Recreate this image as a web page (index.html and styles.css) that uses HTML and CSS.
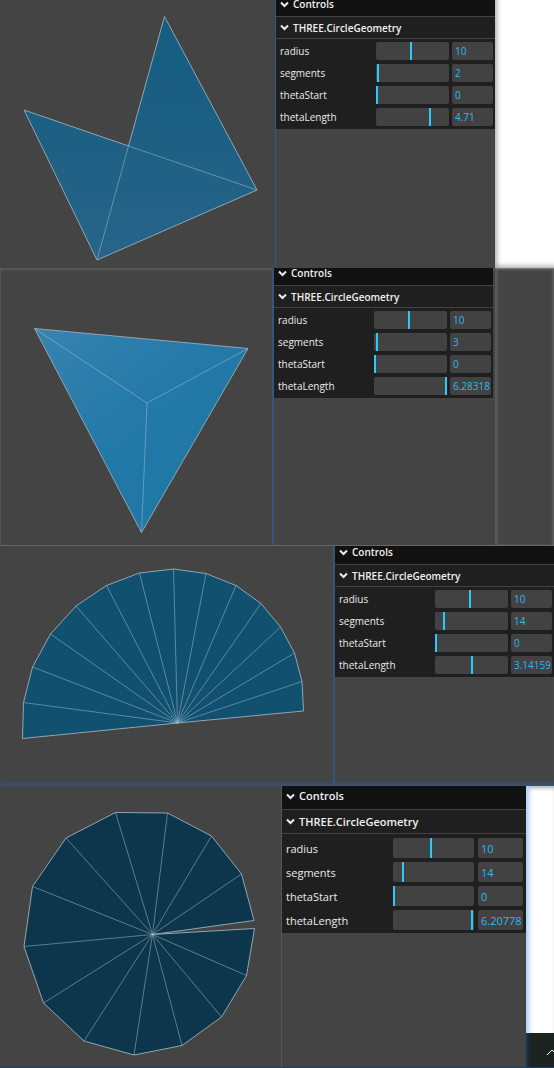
FILE: index.html
```html
<!DOCTYPE html>
<html lang="en">
<head>
<meta charset="utf-8">
<meta name="viewport" content="width=device-width, initial-scale=1">
<title>THREE.CircleGeometry</title>
<link rel="stylesheet" href="styles.css">
</head>
<body>
<main class="stack">

<section class="shot shot-notch">
  <div class="scene">
    <svg viewBox="0 0 275 268" role="img" aria-label="Circle with 2 segments">
      <defs><linearGradient id="g1" x1="0" y1="0" x2="0" y2="1"><stop offset="0" stop-color="#155d82"/><stop offset=".4" stop-color="#1b5f83"/><stop offset="1" stop-color="#286489"/></linearGradient></defs>
      <path class="face" fill="url(#g1)" d="M24 110 97 260 257 190 164.5 16.5 128.5 146Z"/>
      <path class="ray" d="M128.5 146 257 190M128.5 146 97 260"/>
    </svg>
  </div>
  <div class="gui">
    <button class="bar" type="button"><svg class="chev" viewBox="0 0 9 7"><path d="M1 1.5 4.5 5 8 1.5"/></svg>Controls</button>
    <button class="folder" type="button"><svg class="chev" viewBox="0 0 9 7"><path d="M1 1.5 4.5 5 8 1.5"/></svg>THREE.CircleGeometry</button>
    <div class="rows">
      <div class="row"><label for="r1">radius</label><input id="r1" type="range" min="1" max="20" value="10"><input type="text" aria-label="radius value" value="10"></div>
      <div class="row"><label for="s1">segments</label><input id="s1" type="range" min="0" max="128" value="2"><input type="text" aria-label="segments value" value="2"></div>
      <div class="row"><label for="t1">thetaStart</label><input id="t1" type="range" min="0" max="6.28318" step="any" value="0"><input type="text" aria-label="thetaStart value" value="0"></div>
      <div class="row"><label for="l1">thetaLength</label><input id="l1" type="range" min="0" max="6.28318" step="any" value="4.71"><input type="text" aria-label="thetaLength value" value="4.71"></div>
    </div>
  </div>
  <div class="side side-white"></div>
</section>

<section class="shot shot-triangle">
  <div class="scene">
    <svg viewBox="0 0 272 277" role="img" aria-label="Circle with 3 segments">
      <defs><linearGradient id="g2" x1="0" y1="0" x2=".6" y2=".7"><stop offset="0" stop-color="#3783b1"/><stop offset=".75" stop-color="#2278a7"/><stop offset="1" stop-color="#2078a6"/></linearGradient></defs>
      <path class="face" fill="url(#g2)" d="M34.5 60.5 248 80.5 141.5 264.5Z"/>
      <path class="ray" d="M147 135 34.5 60.5M147 135 248 80.5M147 135 141.5 264.5"/>
    </svg>
  </div>
  <div class="gui">
    <button class="bar" type="button"><svg class="chev" viewBox="0 0 9 7"><path d="M1 1.5 4.5 5 8 1.5"/></svg>Controls</button>
    <button class="folder" type="button"><svg class="chev" viewBox="0 0 9 7"><path d="M1 1.5 4.5 5 8 1.5"/></svg>THREE.CircleGeometry</button>
    <div class="rows">
      <div class="row"><label for="r2">radius</label><input id="r2" type="range" min="1" max="20" value="10"><input type="text" aria-label="radius value" value="10"></div>
      <div class="row"><label for="s2">segments</label><input id="s2" type="range" min="0" max="128" value="3"><input type="text" aria-label="segments value" value="3"></div>
      <div class="row"><label for="t2">thetaStart</label><input id="t2" type="range" min="0" max="6.28318" step="any" value="0"><input type="text" aria-label="thetaStart value" value="0"></div>
      <div class="row"><label for="l2">thetaLength</label><input id="l2" type="range" min="0" max="6.28318" step="any" value="6.28318"><input type="text" aria-label="thetaLength value" value="6.28318"></div>
    </div>
  </div>
  <div class="side side-grey"></div>
</section>

<section class="shot shot-half">
  <div class="scene">
    <svg viewBox="0 0 333 239" role="img" aria-label="Half circle with 14 segments">
      <path class="face" fill="#12506f" d="M177.5 177 22.5 192.5 23.5 156.5 32.5 121 50.5 88 76 60 106.5 39.5 139.5 27 173.5 23 206 27.5 236 39.5 261 57.5 280.5 81 294.5 107 302 135.5 303.5 165Z"/>
      <path class="ray" d="M177.5 177 23.5 156.5M177.5 177 32.5 121M177.5 177 50.5 88M177.5 177 76 60M177.5 177 106.5 39.5M177.5 177 139.5 27M177.5 177 173.5 23M177.5 177 206 27.5M177.5 177 236 39.5M177.5 177 261 57.5M177.5 177 280.5 81M177.5 177 294.5 107M177.5 177 302 135.5"/>
    </svg>
  </div>
  <div class="gui">
    <button class="bar" type="button"><svg class="chev" viewBox="0 0 9 7"><path d="M1 1.5 4.5 5 8 1.5"/></svg>Controls</button>
    <button class="folder" type="button"><svg class="chev" viewBox="0 0 9 7"><path d="M1 1.5 4.5 5 8 1.5"/></svg>THREE.CircleGeometry</button>
    <div class="rows">
      <div class="row"><label for="r3">radius</label><input id="r3" type="range" min="1" max="20" value="10"><input type="text" aria-label="radius value" value="10"></div>
      <div class="row"><label for="s3">segments</label><input id="s3" type="range" min="0" max="128" value="14"><input type="text" aria-label="segments value" value="14"></div>
      <div class="row"><label for="t3">thetaStart</label><input id="t3" type="range" min="0" max="6.28318" step="any" value="0"><input type="text" aria-label="thetaStart value" value="0"></div>
      <div class="row"><label for="l3">thetaLength</label><input id="l3" type="range" min="0" max="6.28318" step="any" value="3.14159"><input type="text" aria-label="thetaLength value" value="3.14159"></div>
    </div>
  </div>
</section>

<section class="shot shot-open">
  <div class="scene">
    <svg viewBox="0 0 281 281" role="img" aria-label="Open circle with 14 segments">
      <path class="face" fill="#0d354b" d="M152.5 148.5 254 134.5 241.5 88 211.5 50 167.5 27 115.5 26.5 66 52 32.5 100.5 24 160.5 43.5 217 84 255 134 269 182 259.5 221.5 231 246.5 189.5 254.5 142.5Z"/>
      <path class="ray" d="M152.5 148.5 241.5 88M152.5 148.5 211.5 50M152.5 148.5 167.5 27M152.5 148.5 115.5 26.5M152.5 148.5 66 52M152.5 148.5 32.5 100.5M152.5 148.5 24 160.5M152.5 148.5 43.5 217M152.5 148.5 84 255M152.5 148.5 134 269M152.5 148.5 182 259.5M152.5 148.5 221.5 231M152.5 148.5 246.5 189.5"/>
    </svg>
  </div>
  <div class="gui">
    <button class="bar" type="button"><svg class="chev" viewBox="0 0 9 7"><path d="M1 1.5 4.5 5 8 1.5"/></svg>Controls</button>
    <button class="folder" type="button"><svg class="chev" viewBox="0 0 9 7"><path d="M1 1.5 4.5 5 8 1.5"/></svg>THREE.CircleGeometry</button>
    <div class="rows">
      <div class="row"><label for="r4">radius</label><input id="r4" type="range" min="1" max="20" value="10"><input type="text" aria-label="radius value" value="10"></div>
      <div class="row"><label for="s4">segments</label><input id="s4" type="range" min="0" max="128" value="14"><input type="text" aria-label="segments value" value="14"></div>
      <div class="row"><label for="t4">thetaStart</label><input id="t4" type="range" min="0" max="6.28318" step="any" value="0"><input type="text" aria-label="thetaStart value" value="0"></div>
      <div class="row"><label for="l4">thetaLength</label><input id="l4" type="range" min="0" max="6.28318" step="any" value="6.20778"><input type="text" aria-label="thetaLength value" value="6.20778"></div>
    </div>
  </div>
  <div class="side side-tray">
    <div class="tray"><svg viewBox="0 0 12 8"><path d="M1 7 6 2 11 7"/></svg></div>
  </div>
</section>

</main>
</body>
</html>
```
FILE: styles.css
```css
* { box-sizing: border-box; }
body {
  margin: 0;
  background: #444;
  font-family: "Open Sans", "Noto Sans", sans-serif;
}
.stack { display: flex; flex-direction: column; }

.shot {
  --bar: 16px;
  --bar-end: 8px;
  --folder: 23px;
  --field: 18px;
  --gap: 4px;
  --pad: 3px;
  --slider: 73px;
  --number: 41px;
  --between: 3px;
  --text: 10px;
  display: flex;
  background: #444;
}
.scene { flex: 1; min-width: 0; }
.scene svg { display: block; width: 100%; height: auto; }
.face { stroke: #8fa6b2; stroke-width: 1; stroke-linejoin: round; }
.ray { fill: none; stroke: #a5c3d2; stroke-opacity: .5; stroke-width: 1; }

.gui {
  flex: none;
  width: 220px;
  border-left: 1px solid #35557d;
  color: #ebebeb;
  font-size: var(--text);
}
.gui button {
  display: flex;
  align-items: center;
  gap: 4px;
  width: 100%;
  margin: 0;
  padding: 0 4px;
  border: 0;
  color: #f0f0f0;
  font: 600 var(--text) "Open Sans", "Noto Sans", sans-serif;
  line-height: 8px;
  text-align: left;
}
.gui .bar {
  height: var(--bar);
  padding-bottom: var(--bar-end);
  background: #111;
}
.gui .folder {
  height: var(--folder);
  background: #1f1f1f;
  border-top: 1px solid #424242;
  border-bottom: 1px solid #424242;
}
.chev { flex: none; width: 9px; height: 7px; fill: none; stroke: #ebebeb; stroke-width: 2; }
.rows {
  display: grid;
  gap: var(--gap);
  padding: var(--pad) 2px 3px 4px;
  background: #1f1f1f;
}
.row { display: flex; align-items: center; height: var(--field); }
.row label { flex: 1; }
.row input {
  height: var(--field);
  margin: 0;
  border: 0;
  border-radius: 2px;
  background: #424242;
}
.row input[type="range"] { appearance: none; width: var(--slider); margin-right: var(--between); }
.row input[type="range"]::-webkit-slider-thumb {
  appearance: none;
  width: 2px;
  height: var(--field);
  background: #2cc9ff;
}
.row input[type="text"] {
  width: var(--number);
  padding: 0 0 0 3px;
  color: #2fb9ec;
  font: var(--text) "Open Sans", "Noto Sans", sans-serif;
}

.side { flex: none; width: 59px; }
.side-white { background: #fff; box-shadow: inset 4px -4px 5px -2px #aaa; }
.side-grey { border-top: 1px solid #777; border-left: 1px solid #5a5a5a; box-shadow: inset -2px 0 3px -1px #6a6a6a, inset 2px 0 3px -1px #666; }

.shot-triangle { --bar: 17px; --bar-end: 7px; border-bottom: 1px solid #666; box-shadow: inset 0 3px 3px -1px #5c5c5c, inset 1px 0 #555; }
.shot-triangle .gui { width: 223px; border-left: 2px solid #35557d; padding-right: 2px; }

.shot-half { --bar: 18px; --bar-end: 6px; border-bottom: 1px solid #35557d; box-shadow: inset 0 -4px 4px -2px #3a5272; }
.shot-half .gui { width: 221px; border-left: 2px solid #35557d; }

.shot-open {
  --bar: 23px;
  --bar-end: 3px;
  --folder: 25px;
  --field: 20px;
  --pad: 4px;
  --slider: 81px;
  --number: 45px;
  --between: 4px;
  --text: 11px;
  border-bottom: 1px solid #1d3f61;
}
.shot-open .gui { width: 245px; border-left: 1px solid #555; }
.shot-open .rows { padding-right: 3px; }
.side-tray {
  display: flex;
  flex-direction: column;
  justify-content: flex-end;
  width: 28px;
  background: #fff;
  box-shadow: inset 5px 0 5px -2px #a9ccff, inset 0 4px 4px -2px #aaa;
}
.tray {
  display: flex;
  align-items: center;
  justify-content: flex-end;
  height: 34px;
  padding-top: 4px;
  background: linear-gradient(to right, #163a5e, #1d2321 4px);
  overflow: hidden;
}
.tray svg { flex: none; width: 12px; height: 8px; margin-right: -4px; fill: none; stroke: #fff; stroke-width: 1; }
```
